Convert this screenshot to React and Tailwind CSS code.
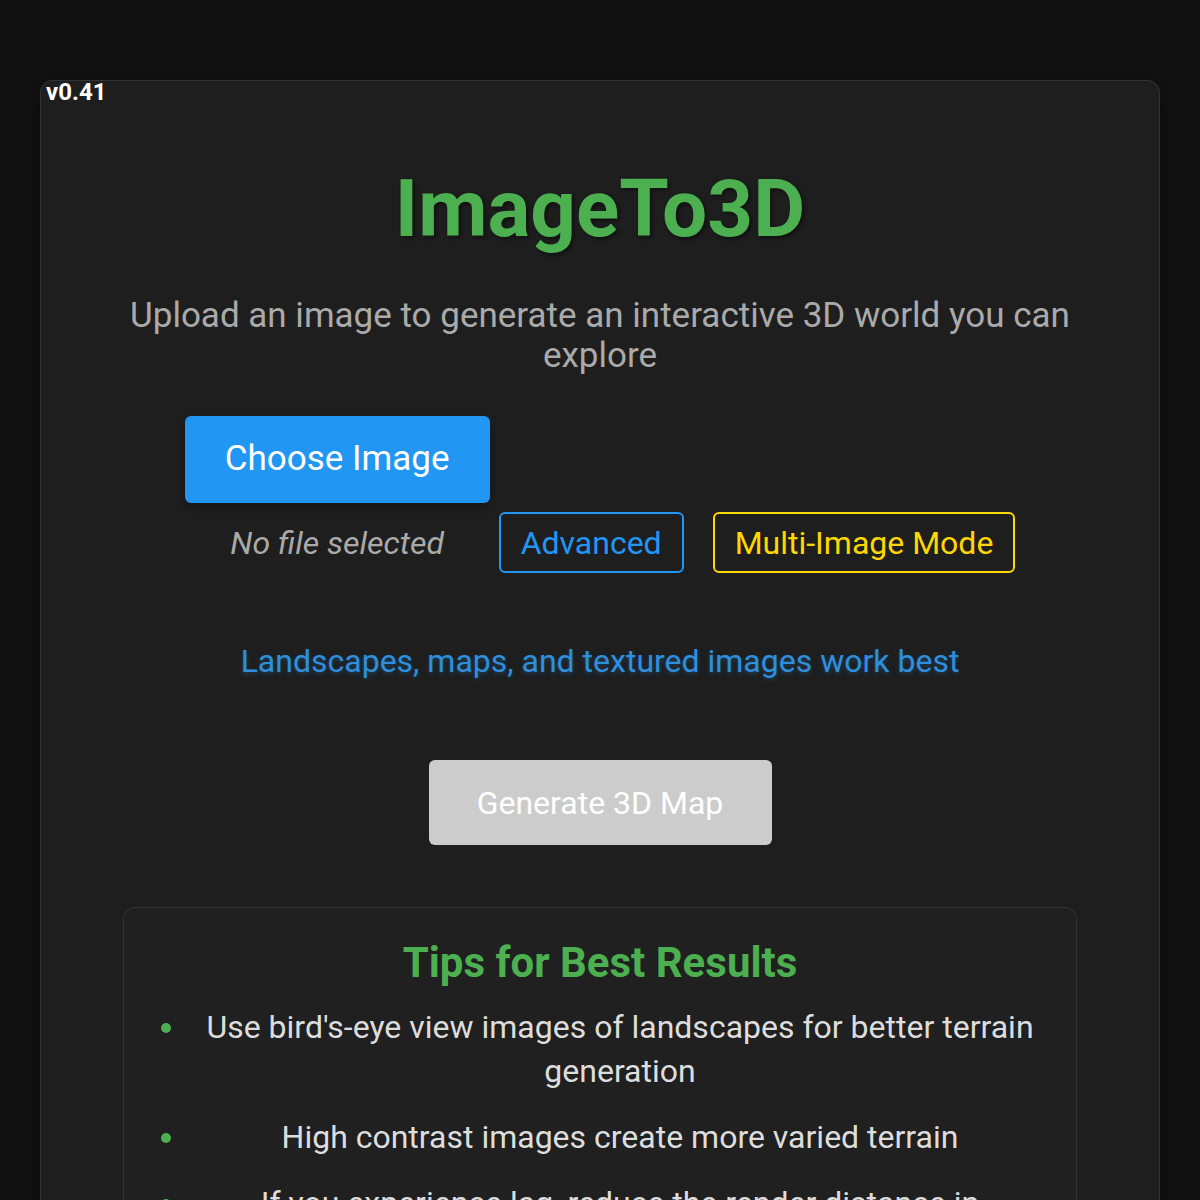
import React from 'react'

const tips = [
  "Use bird's-eye view images of landscapes for better terrain generation",
  'High contrast images create more varied terrain',
  'If you experience lag, reduce the render distance in settings',
]

export default function App() {
  return (
    <div className="min-h-screen bg-[#121212] px-10 pt-20 font-['Roboto',sans-serif] text-white">
      <span className="absolute left-[46px] top-[74px] z-10 text-[24px] font-bold">v0.41</span>

      <main className="rounded-xl border border-[#333] bg-[#1e1e1e] px-10 pt-[80px] pb-10 text-center shadow-[0_4px_20px_rgba(0,0,0,0.5)]">
        <h1 className="text-[80px] font-bold leading-[1.2] text-[#4caf50] [text-shadow:2px_2px_4px_rgba(0,0,0,0.5)]">
          ImageTo3D
        </h1>

        <p className="mt-[39px] text-[35px] leading-[40px] text-[#aaaaaa]">
          Upload an image to generate an interactive 3D world you can explore
        </p>

        <div className="mt-[40px] flex items-end justify-center">
          <div className="flex w-[305px] flex-col">
            <button className="h-[87px] rounded-md bg-[#2196f3] text-[35px] text-white shadow-[0_4px_8px_rgba(0,0,0,0.3)]">
              Choose Image
            </button>
            <div className="mt-[9px] flex h-[61px] items-center justify-center text-[32px] italic text-[#aaaaaa]">
              No file selected
            </div>
          </div>
          <button className="ml-[9px] h-[61px] rounded-md border-2 border-[#2196f3] px-5 text-[32px] text-[#2196f3]">
            Advanced
          </button>
          <button className="ml-[29px] h-[61px] rounded-md border-2 border-[#ffd700] px-5 text-[32px] text-[#ffd700]">
            Multi-Image Mode
          </button>
        </div>

        <p className="mt-[68px] text-[32px] leading-[40px] text-[#2f8fdc] [text-shadow:0_2px_4px_rgba(33,150,243,0.3)]">
          Landscapes, maps, and textured images work best
        </p>

        <button className="mt-[79px] h-[85px] w-[343px] rounded-md bg-[#cccccc] text-[32px] text-white">
          Generate 3D Map
        </button>

        <section className="mx-[42px] mt-[62px] rounded-xl border border-[#333] bg-[#202020] px-6 pt-[29px] pb-8">
          <h2 className="text-[42px] font-bold leading-[52px] text-[#4caf50]">Tips for Best Results</h2>
          <ul className="mt-[16px] list-disc pl-10 marker:text-[#4caf50]">
            {tips.map((t) => (
              <li key={t} className="mb-[22px] px-[14px] text-[32px] leading-[44px] text-[#dddddd]">
                {t}
              </li>
            ))}
          </ul>
        </section>
      </main>
    </div>
  )
}
